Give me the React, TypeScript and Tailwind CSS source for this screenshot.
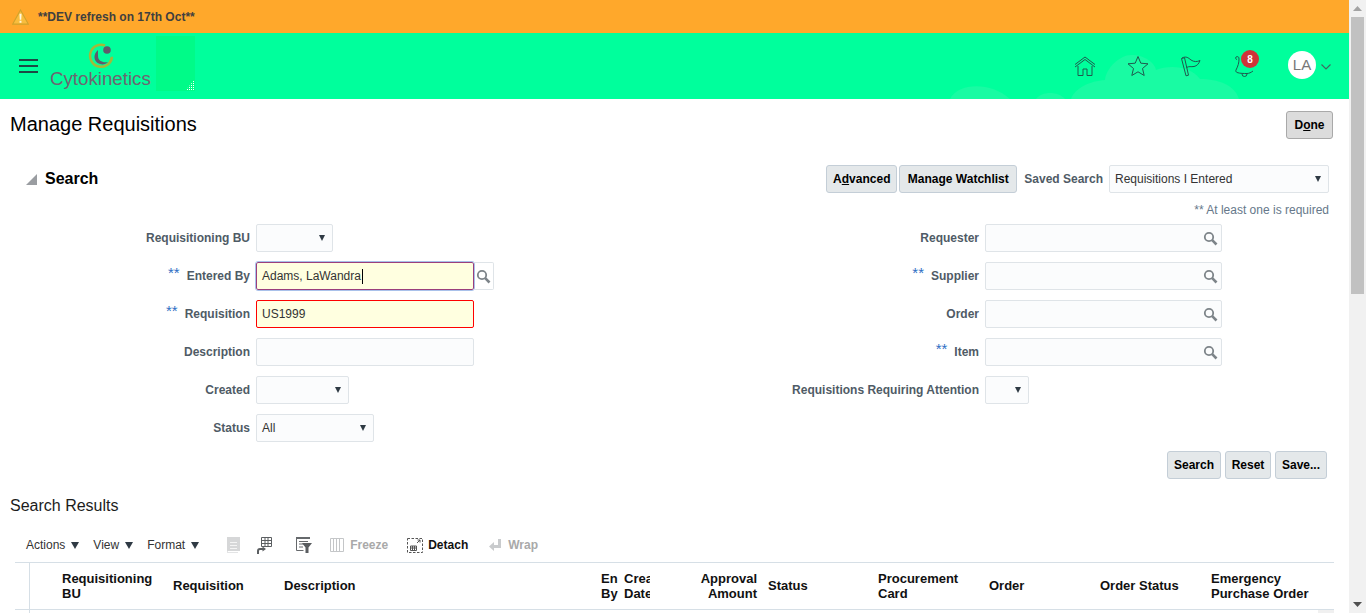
const FONT = "font-['Liberation_Sans',Arial,sans-serif]";

const Arrow = ({ small }: { small?: boolean }) => (
  <svg width={small ? 6 : 8} height={small ? 6 : 7} viewBox="0 0 8 7" className="shrink-0" preserveAspectRatio="none">
    <path d="M0 0h8L4 7z" fill="#2f3a44" />
  </svg>
);

const Magnifier = () => (
  <svg width="15" height="15" viewBox="0 0 15 15" fill="none" stroke="#7d8489">
    <circle cx="6" cy="6" r="4.2" strokeWidth="1.8" />
    <path d="M9.2 9.2l4.3 4.3" strokeWidth="2.6" />
  </svg>
);

function Label({ text, star }: { text: string; star?: boolean }) {
  return (
    <div className="flex items-center justify-end text-xs font-bold text-[#4f5b66]">
      {star && <span className="-mt-1.5 mr-[7px] text-[15px] font-normal text-[#2f6fc4]">**</span>}
      {text}
    </div>
  );
}

function Select({ width, value }: { width: string; value?: string }) {
  return (
    <div className={`flex h-7 items-center justify-between rounded-[2px] border border-[#dfe4e8] bg-[#fbfcfd] pl-[5px] pr-[7px] text-xs text-[#333] ${width}`}>
      <span>{value}</span>
      <Arrow small />
    </div>
  );
}

function LovInput() {
  return (
    <div className="flex h-7 w-[237px] items-center justify-end rounded-[2px] border border-[#dfe4e8] bg-[#fbfcfd] pr-[3px]">
      <Magnifier />
    </div>
  );
}

function Row({ label, star, labelWidth, children }: { label: string; star?: boolean; labelWidth: string; children: React.ReactNode }) {
  return (
    <div className="flex h-7 items-center gap-1.5">
      <div className={labelWidth}>
        <Label text={label} star={star} />
      </div>
      {children}
    </div>
  );
}

function Button({ children, className = "" }: { children: React.ReactNode; className?: string }) {
  return (
    <button className={`flex h-7 items-center justify-center rounded-[3px] border border-[#c4ced7] bg-[#e4e8ea] text-xs font-bold text-[#000] ${className}`}>
      {children}
    </button>
  );
}

function Logo() {
  return (
    <div className="relative h-[66px] w-[145px]">
      <svg width="26" height="26" viewBox="0 0 26 26" className="absolute left-[50px] top-[10px]" fill="none">
        <path d="M17 2.500A11 11 0 1 0 24 14" stroke="#a3b93a" strokeWidth="2.500" />
        <path d="M24.500 13c0 6-5 12-12 12 4-1 9-4 10-10z" fill="#a3b93a" />
        <path d="M10 7C5 11 5 19 12 21c3 1 6 0 8-2-5 1-10-1-10-6 0-2 0-4 0-6z" fill="#5f5a6b" />
        <circle cx="19" cy="7" r="3.800" fill="#5f5a6b" />
      </svg>
      <span className="absolute left-[12px] top-[35px] text-[18.7px] leading-[22px] text-[#6d6670]">Cytokinetics</span>
      <div className="absolute left-[118px] top-[3px] h-[55px] w-[39px] bg-[#00fb88]">
        <svg width="10" height="12" viewBox="0 0 10 12" className="absolute bottom-0 right-0">
          <defs>
            <pattern id="dots" width="2" height="2" patternUnits="userSpaceOnUse">
              <rect width="1" height="1" fill="#ffffff" />
            </pattern>
          </defs>
          <path d="M10 0v12H0z" fill="url(#dots)" />
        </svg>
      </div>
    </div>
  );
}

function Header() {
  return (
    <header className="relative flex h-[66px] items-center overflow-hidden bg-[#00ff9c]">
      <svg width="310" height="66" viewBox="0 0 310 66" className="absolute bottom-0 right-[99px]" fill="#19fba3">
        <path d="M131 66C135 55 150 48 165 47 166 35 180 22 191 22 205 22 215 30 216 37 228 32 250 32 260 46 278 46 295 52 299 66Z" />
        <path d="M96 66C102 58 118 58 125 66Z" />
        <path d="M10 66C18 50 50 48 70 66Z" />
      </svg>
      <button className="relative ml-[19px] flex h-[14px] w-[19px] shrink-0 flex-col justify-between">
        <span className="h-0.5 w-full bg-[#1d4a45]" />
        <span className="h-0.5 w-full bg-[#1d4a45]" />
        <span className="h-0.5 w-full bg-[#1d4a45]" />
      </button>
      <Logo />
      <div className="relative ml-auto flex items-center text-[#1f5a4e]">
        <svg width="22" height="22" viewBox="0 0 22 22" fill="none" stroke="currentColor" strokeWidth="1">
          <path d="M1 9.500L11 2l10 7.500M1 12L11 4.500 21 12M4 11v9.500h5V14h4v6.500h5V11" />
        </svg>
        <svg width="22" height="22" viewBox="0 0 22 22" className="ml-[31px]" fill="none" stroke="currentColor" strokeWidth="1">
          <path d="M11 1.500l2.800 6.700 7.200.6-5.500 4.700 1.700 7-6.200-3.700-6.200 3.700 1.700-7L1 8.800l7.200-.6z" />
        </svg>
        <svg width="22" height="22" viewBox="0 0 22 22" className="ml-[31px]" fill="none" stroke="currentColor" strokeWidth="1">
          <path d="M1.500 3.500l3-.8 4 17.500-2.500.6zM2 3c4-2 6-.5 9 2 3 2 6 2 9 .5-1 3-3 5.500-6 6-3 .5-5-.500-7.500 1" />
        </svg>
        <div className="relative ml-[31px] h-[26px] w-[26px]">
          <svg width="26" height="26" viewBox="0 0 26 26" fill="none" stroke="currentColor" strokeWidth="1">
            <path d="M3 4c2-1 3 0 3 2 0 4-1 7-3 11-.5 1 0 2 1 2.500 3 1 7 1 10 1 2 0 4-1 6-2.500" />
            <path d="M3 4a1.500 1.500 0 0 0 1 2.500" />
            <path d="M9 21a2.500 2.500 0 0 0 5 0" />
          </svg>
          <span className="absolute left-[8px] -top-[3px] flex h-[18px] w-[18px] items-center justify-center rounded-full bg-[#cf3338] text-[10px] font-bold text-white">8</span>
        </div>
        <div className="-mt-0.5 ml-[29px] flex h-7 w-7 items-center justify-center rounded-full bg-white text-[15px] text-[#777]">LA</div>
        <svg width="10" height="6" viewBox="0 0 10 6" className="ml-[5px] mr-[18px] mt-0.5" fill="none" stroke="#3f6a62" strokeWidth="1.2">
          <path d="M.5.500L5 5 9.500.5" />
        </svg>
      </div>
    </header>
  );
}

function SearchPanel() {
  return (
    <section>
      <div className="flex h-7 items-center pl-[26px] pr-5">
        <svg width="11" height="11" viewBox="0 0 11 11">
          <path d="M11 0v11H0z" fill="#9a9da1" />
        </svg>
        <h2 className="ml-2 text-base font-bold text-black">Search</h2>
        <div className="ml-auto flex items-center">
          <Button className="mr-0.5 w-[71px]"><span>A<u>d</u>vanced</span></Button>
          <Button className="w-[118px]">Manage Watchlist</Button>
          <span className="ml-[7px] mr-[6px] text-xs font-bold text-[#4f5b66]">Saved Search</span>
          <Select width="w-[220px]" value="Requisitions I Entered" />
        </div>
      </div>
      <div className="mt-2.5 pr-5 text-right text-xs leading-[14px] text-[#66788a]">** At least one is required</div>
      <div className="mt-[7px] flex">
        <div className="flex w-[750px] flex-col gap-2.5">
          <Row labelWidth="w-[250px]" label="Requisitioning BU"><Select width="w-[77px]" /></Row>
          <Row labelWidth="w-[250px]" label="Entered By" star>
            <div className="flex">
              <div className="flex h-7 w-[218px] items-center rounded-[2px] border border-[#9b3f7c] bg-[#ffffe0] pl-[5px] text-xs text-[#333] outline outline-1 outline-[#a9c1ea]">
                Adams, LaWandra<span className="ml-px h-[15px] w-px bg-black" />
              </div>
              <div className="flex h-7 w-5 items-center justify-center rounded-r-[2px] border border-l-0 border-[#dfe4e8]"><Magnifier /></div>
            </div>
          </Row>
          <Row labelWidth="w-[250px]" label="Requisition" star>
            <div className="flex h-7 w-[218px] items-center rounded-[2px] border border-[#f00] bg-[#ffffe0] pl-[5px] text-xs text-[#333]">US1999</div>
          </Row>
          <Row labelWidth="w-[250px]" label="Description"><div className="h-7 w-[218px] rounded-[2px] border border-[#dfe4e8] bg-[#fbfcfd]" /></Row>
          <Row labelWidth="w-[250px]" label="Created"><Select width="w-[93px]" /></Row>
          <Row labelWidth="w-[250px]" label="Status"><Select width="w-[118px]" value="All" /></Row>
        </div>
        <div className="flex flex-1 flex-col gap-2.5">
          <Row labelWidth="w-[229px]" label="Requester"><LovInput /></Row>
          <Row labelWidth="w-[229px]" label="Supplier" star><LovInput /></Row>
          <Row labelWidth="w-[229px]" label="Order"><LovInput /></Row>
          <Row labelWidth="w-[229px]" label="Item" star><LovInput /></Row>
          <Row labelWidth="w-[229px]" label="Requisitions Requiring Attention"><Select width="w-11" /></Row>
        </div>
      </div>
      <div className="mt-[9px] flex justify-end gap-1 pr-[22px]">
        <Button className="w-[54px]">Search</Button>
        <Button className="w-[46px]">Reset</Button>
        <Button className="w-[52px]">Save...</Button>
      </div>
    </section>
  );
}

function Toolbar() {
  return (
    <div className="ml-[26px] mt-[20px] flex h-[18px] items-center text-xs text-[#333]">
      <span>Actions</span><span className="ml-[6px]"><Arrow /></span>
      <span className="ml-[14px]">View</span><span className="ml-[6px]"><Arrow /></span>
      <span className="ml-[14px]">Format</span><span className="ml-[6px]"><Arrow /></span>
      <svg width="15" height="16" viewBox="0 0 15 16" className="ml-[26px]">
        <path d="M0 2h2v14h11v-1H3V2z" fill="#e3e4e5" />
        <path d="M2 0h13v14H2z" fill="#d6d7d8" />
        <path d="M5 5h7v1H5zM5 8h7v1H5zM5 11h7v1H5z" fill="#f4f4f4" />
      </svg>
      <svg width="16" height="17" viewBox="0 0 16 17" className="ml-[16px]" fill="none" stroke="#5b5e61">
        <path d="M5.500.5h10v9h-10zM5.500 3.500h10M5.500 6.500h10M9 .5v9M12 .5v9" />
        <path d="M8 12H4c-1.500 0-2 1-2 2v3" strokeWidth="2" />
        <path d="M6.500 9.500L10 12l-3.500 2.500z" fill="#5b5e61" stroke="none" />
      </svg>
      <svg width="16" height="16" viewBox="0 0 16 16" className="ml-[24px]" fill="none">
        <path d="M0 0h14v2H0z" fill="#66696c" />
        <path d="M.5 2v11.500h7M3 4.500h9M3 7h5M3 10h4" stroke="#66696c" />
        <path d="M6 6h10l-3.500 4.500V16h-3v-5.500z" fill="#5a5d60" />
      </svg>
      <svg width="14" height="14" viewBox="0 0 14 14" className="ml-[18px]" fill="none" stroke="#c4c6c8">
        <path d="M.5.500h13v13H.5zM3.500.5v13M6.500.5v13M9.500.5v13" />
      </svg>
      <span className="ml-[6px] font-bold text-[#a9a9a9]">Freeze</span>
      <svg width="16" height="15" viewBox="0 0 16 15" className="ml-[19px]" fill="none" stroke="#555">
        <path d="M.5.500h15v14H.5z" strokeDasharray="2.500 1.500" />
        <path d="M3.500 8h6v4.500h-6zM3.500 10h6M5.500 8v4.500M7.500 8v4.500M10 5l3-3M10.500 2H13v2.500" />
      </svg>
      <span className="ml-[5px] font-bold text-[#111]">Detach</span>
      <svg width="14" height="14" viewBox="0 0 14 14" className="ml-[20px]">
        <path d="M10 1h3v9H6v3L1 8.500 6 4v3h4z" fill="#c9cbcd" />
      </svg>
      <span className="ml-[6px] font-bold text-[#a9a9a9]">Wrap</span>
    </div>
  );
}

const COLUMNS: { lines: string[]; x: string; clip?: string; right?: boolean }[] = [
  { lines: ["Requisitioning", "BU"], x: "w-[111px]" },
  { lines: ["Requisition"], x: "w-[111px]" },
  { lines: ["Description"], x: "w-[317px]" },
  { lines: ["En", "By"], x: "w-[23px]", clip: "overflow-hidden" },
  { lines: ["Creation", "Date"], x: "w-[26px]", clip: "overflow-hidden" },
  { lines: ["Approval", "Amount"], x: "w-[107px] pl-[50px]", right: true },
  { lines: ["Status"], x: "w-[110px] ml-[11px]" },
  { lines: ["Procurement", "Card"], x: "w-[111px]" },
  { lines: ["Order"], x: "w-[111px]" },
  { lines: ["Order Status"], x: "w-[111px]" },
  { lines: ["Emergency", "Purchase Order"], x: "w-[112px]" },
];

function ResultsTable() {
  return (
    <div className="ml-[15px] mt-2 h-[52px] w-[1319px] border-t border-[#d6dfe6]">
      <div className="flex h-[47px] border-b border-[#d6dfe6]">
        <div className="h-[51px] w-[15px] shrink-0 border-r border-[#d6dfe6]" />
        <div className="flex pl-[32px]">
          {COLUMNS.map((c) => (
            <div key={c.lines[0]} className={`flex h-full shrink-0 flex-col justify-center whitespace-nowrap text-[13px] font-bold leading-[15px] text-[#111] ${c.x} ${c.clip ?? ""} ${c.right ? "items-end" : ""} ${c.lines.length === 1 ? "pb-0.5" : ""}`}>
              {c.lines.map((l) => <span key={l}>{l}</span>)}
            </div>
          ))}
        </div>
      </div>
      <div className="ml-auto h-1 w-4 bg-[#f0f0f0]" />
    </div>
  );
}

function Scrollbar() {
  return (
    <div className="flex w-[17px] shrink-0 flex-col items-center bg-[#f1f1f1]">
      <svg width="9" height="5" viewBox="0 0 9 5" className="mt-[6px]"><path d="M0 5h9L4.500 0z" fill="#a3a3a3" /></svg>
      <div className="mt-[6px] h-[277px] w-[13px] bg-[#c1c1c1]" />
      <svg width="9" height="5" viewBox="0 0 9 5" className="mt-auto mb-[6px]"><path d="M0 0h9L4.500 5z" fill="#505050" /></svg>
    </div>
  );
}

export default function App() {
  return (
    <div className={`flex h-[613px] w-[1366px] overflow-hidden bg-white ${FONT}`}>
      <main className="min-w-0 flex-1">
        <div className="flex h-[33px] items-center bg-[#ffa82b] pl-3 text-xs text-[#3f3f3f]">
          <svg width="17" height="16" viewBox="0 0 16 15">
            <path d="M8 .8l7.300 13.400H.7z" fill="#f9bd3d" stroke="#cfa22c" />
            <path d="M7 4.500h2l-.3 5.500H7.300zM7.100 11h1.800v1.800H7.100z" fill="#fff8dc" />
          </svg>
          <span className="ml-[9px] font-bold">**DEV refresh on 17th Oct**</span>
        </div>
        <Header />
        <div className="flex items-start justify-between pl-2.5 pr-4 pt-3">
          <h1 className="text-xl leading-[26px] text-black">Manage Requisitions</h1>
          <button className="h-7 w-[47px] rounded-[3px] border border-[#a9a9a9] bg-[#dcdcdc] text-xs font-bold text-black">D<u>o</u>ne</button>
        </div>
        <div className="mt-[26px]">
          <SearchPanel />
        </div>
        <h2 className="ml-2.5 mt-[17px] text-base leading-5 text-[#1c1c1c]">Search Results</h2>
        <Toolbar />
        <ResultsTable />
      </main>
      <Scrollbar />
    </div>
  );
}
